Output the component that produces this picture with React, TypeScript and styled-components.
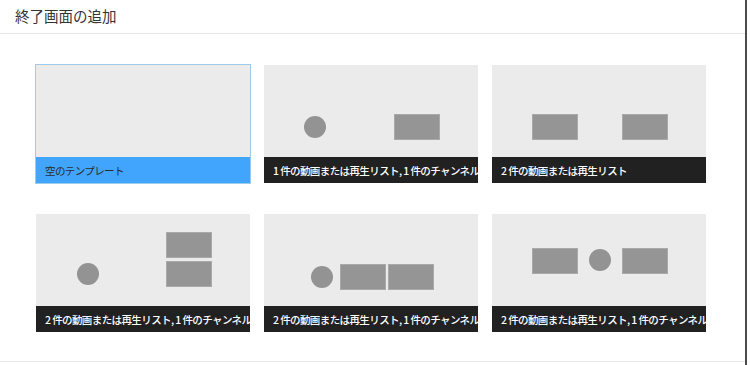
import React from 'react';
import styled, { createGlobalStyle } from 'styled-components';

const GlobalStyle = createGlobalStyle`
  html, body {
    margin: 0;
    padding: 0;
    background: #ffffff;
  }
  body {
    font-family: "Noto Sans CJK JP", "Noto Sans", "Liberation Sans", sans-serif;
  }
`;

type Shape = {
  kind: 'circle' | 'rect';
  x: number;
  y: number;
};

type Template = {
  label: string;
  shapes: Shape[];
};

const templates: Template[] = [
  { label: '空のテンプレート', shapes: [] },
  {
    label: '1 件の動画または再生リスト, 1 件のチャンネル',
    shapes: [
      { kind: 'circle', x: 40, y: 51 },
      { kind: 'rect', x: 130, y: 49 },
    ],
  },
  {
    label: '2 件の動画または再生リスト',
    shapes: [
      { kind: 'rect', x: 40, y: 49 },
      { kind: 'rect', x: 130, y: 49 },
    ],
  },
  {
    label: '2 件の動画または再生リスト, 1 件のチャンネル',
    shapes: [
      { kind: 'circle', x: 41, y: 49 },
      { kind: 'rect', x: 130, y: 18 },
      { kind: 'rect', x: 130, y: 47 },
    ],
  },
  {
    label: '2 件の動画または再生リスト, 1 件のチャンネル',
    shapes: [
      { kind: 'circle', x: 47, y: 52 },
      { kind: 'rect', x: 76, y: 50 },
      { kind: 'rect', x: 124, y: 50 },
    ],
  },
  {
    label: '2 件の動画または再生リスト, 1 件のチャンネル',
    shapes: [
      { kind: 'rect', x: 40, y: 34 },
      { kind: 'circle', x: 97, y: 35 },
      { kind: 'rect', x: 130, y: 34 },
    ],
  },
];

const Dialog = styled.div`
  width: 747px;
  height: 365px;
  box-sizing: border-box;
  border-right: 2px solid #4a4a4a;
  display: flex;
  flex-direction: column;
`;

const Header = styled.div`
  height: 33px;
  flex: none;
  border-bottom: 1px solid #e6e6e6;
  display: flex;
  align-items: center;
  padding-left: 15px;
`;

const Title = styled.h2`
  margin: 0;
  font-size: 14.5px;
  font-weight: 400;
  color: #333333;
  line-height: 1;
  margin-top: -1px;
`;

const Body = styled.div`
  height: 328px;
  flex: none;
  box-sizing: border-box;
  border-bottom: 1px solid #e8e8e8;
  padding: 30px 0 0 35px;
`;

const Grid = styled.div`
  display: grid;
  grid-template-columns: repeat(3, 216px);
  grid-auto-rows: 120px;
  column-gap: 12px;
  row-gap: 29px;
`;

const Card = styled.div<{ $selected?: boolean }>`
  display: flex;
  flex-direction: column;
  box-sizing: border-box;
  border: 1px solid ${(p) => (p.$selected ? '#9fcbea' : 'transparent')};
  cursor: pointer;
`;

const Preview = styled.div`
  position: relative;
  flex: 1;
  background: #ebebeb;
`;

const Circle = styled.div`
  position: absolute;
  width: 22px;
  height: 22px;
  border-radius: 50%;
  background: #939393;
`;

const Box = styled.div`
  position: absolute;
  width: 46px;
  height: 26px;
  box-sizing: border-box;
  background: #959595;
  border: 1px solid #a9a9a9;
`;

const Caption = styled.div<{ $selected?: boolean }>`
  height: 26px;
  flex: none;
  display: flex;
  align-items: center;
  padding-left: 9px;
  font-size: 10.5px;
  letter-spacing: -0.6px;
  white-space: nowrap;
  background: ${(p) => (p.$selected ? '#41a5fe' : '#212121')};
  color: ${(p) => (p.$selected ? '#2b2b2b' : '#ffffff')};
  font-weight: ${(p) => (p.$selected ? 400 : 500)};
`;

export default function App() {
  return (
    <>
      <GlobalStyle />
      <Dialog>
        <Header>
          <Title>終了画面の追加</Title>
        </Header>
        <Body>
          <Grid>
            {templates.map((t, i) => (
              <Card key={i} $selected={i === 0}>
                <Preview>
                  {t.shapes.map((s, j) =>
                    s.kind === 'circle' ? (
                      <Circle key={j} style={{ left: s.x, top: s.y }} />
                    ) : (
                      <Box key={j} style={{ left: s.x, top: s.y }} />
                    )
                  )}
                </Preview>
                <Caption $selected={i === 0}>{t.label}</Caption>
              </Card>
            ))}
          </Grid>
        </Body>
      </Dialog>
    </>
  );
}
